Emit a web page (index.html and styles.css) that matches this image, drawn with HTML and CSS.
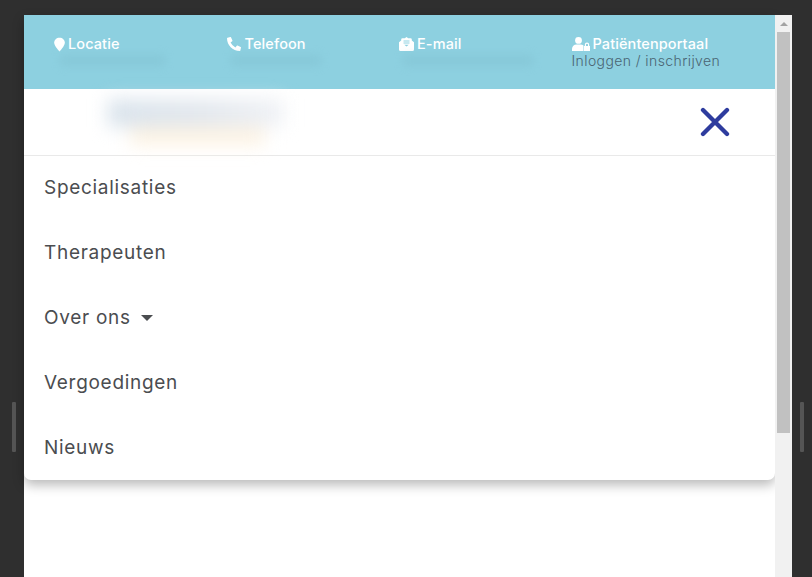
FILE: index.html
```html
<!DOCTYPE html>
<html lang="nl">
<head>
<meta charset="utf-8">
<title>Menu</title>
<link rel="stylesheet" href="styles.css">
</head>
<body>
<div class="gutter gutter-left"><span class="handle"></span></div>
<main class="page">
  <div class="content">
    <div class="panel">
      <section class="topbar">
        <div class="info">
          <div class="info-title"><svg class="icon icon-pin" viewBox="0 0 12 15"><path d="M6 0C2.700 0 .2 2.300.2 5.400.2 8.600 3.600 12.600 6 15c2.400-2.400 5.800-6.400 5.800-9.600C11.800 2.300 9.300 0 6 0z"/></svg>Locatie</div>
          <div class="smudge smudge-a"></div>
        </div>
        <div class="info">
          <div class="info-title"><svg class="icon icon-phone" viewBox="0 0 512 512"><path d="M497.39 361.8l-112-48a24 24 0 0 0-28 6.9l-49.6 60.6A370.66 370.66 0 0 1 130.6 204.11l60.6-49.6a23.94 23.94 0 0 0 6.9-28l-48-112A24.16 24.16 0 0 0 122.6.61l-104 24A24 24 0 0 0 0 48c0 256.5 207.9 464 464 464a24 24 0 0 0 23.4-18.6l24-104a24.29 24.29 0 0 0-14.01-27.6z"/></svg>Telefoon</div>
          <div class="smudge smudge-b"></div>
        </div>
        <div class="info">
          <div class="info-title"><svg class="icon icon-mail" viewBox="0 0 15 14"><path fill-rule="evenodd" d="M7.500 0 5.800 1.200H3.500A1.300 1.300 0 0 0 2.200 2.500V3.600L0 5.300V12.500A1.500 1.500 0 0 0 1.500 14h12a1.500 1.500 0 0 0 1.500-1.500V5.300L12.800 3.600V2.500a1.300 1.300 0 0 0-1.300-1.300H9.200zM4.500 3.400h6v1h-6zm0 2.200h6v1h-6zM5.300 7.800h4.400L7.500 9.400z"/></svg>E-mail</div>
          <div class="smudge smudge-c"></div>
        </div>
        <div class="info">
          <div class="info-title"><svg class="icon icon-user" viewBox="0 0 18 14"><circle cx="6.500" cy="3.400" r="3.400"/><path d="M4.500 7.600h4c1.200 0 2.200.4 3 1V14H0v-2C0 9.500 2 7.600 4.500 7.600z"/><path d="M12 9h.8V7.800a2.200 2.200 0 0 1 4.400 0V9h.8v5h-6zm2-1.200V9h2V7.800a1 1 0 0 0-2 0z" fill-rule="evenodd"/></svg>Patiëntenportaal</div>
          <div class="info-sub">Inloggen / inschrijven</div>
        </div>
      </section>
      <header class="brandbar">
        <div class="logo-blur"><span class="logo-blue"></span><span class="logo-sand"></span></div>
        <svg class="close" viewBox="0 0 30 30"><path d="M3 3 27 27M27 3 3 27"/></svg>
      </header>
      <nav class="menu">
        <a class="menu-item">Specialisaties</a>
        <a class="menu-item">Therapeuten</a>
        <a class="menu-item">Over ons<span class="caret"></span></a>
        <a class="menu-item">Vergoedingen</a>
        <a class="menu-item">Nieuws</a>
      </nav>
    </div>
  </div>
  <aside class="scrollbar">
    <span class="arrow"></span>
    <span class="thumb"></span>
  </aside>
</main>
<div class="gutter gutter-right"><span class="handle"></span></div>
</body>
</html>
```
FILE: styles.css
```css
* { box-sizing: border-box; }
html, body { height: 100%; }
body {
  margin: 0;
  display: flex;
  overflow: hidden;
  background: #2f2f2f;
  font-family: Inter, "Liberation Sans", sans-serif;
}
.gutter { flex: none; padding-top: 402px; }
.gutter-left { width: 24px; padding-left: 12px; }
.gutter-right { width: 20px; padding-left: 8px; }
.handle { display: block; width: 4px; height: 50px; background: #555; border-radius: 1px; }
.page { flex: none; width: 768px; height: 562px; margin-top: 15px; display: flex; background: #fff; }
.content { flex: none; width: 751px; }
.panel {
  background: #fff;
  border-radius: 0 0 7px 7px;
  box-shadow: 0 5px 12px rgba(0, 0, 0, .28);
}
.topbar {
  height: 74px;
  padding: 20px 0 0 30px;
  display: grid;
  grid-template-columns: repeat(4, 172.5px);
  background: #8dd0e0;
  overflow: hidden;
}
.info-title {
  display: flex;
  align-items: center;
  height: 18px;
  font-size: 14.500px;
  font-weight: 500;
  line-height: 18px;
  letter-spacing: .1px;
  color: #fff;
  white-space: nowrap;
}
.info-sub { font-size: 14px; font-weight: 300; line-height: 15px; letter-spacing: .4px; color: #4a6472; white-space: nowrap; }
.icon { flex: none; fill: #fff; }
.icon-pin { width: 11px; height: 15px; margin-right: 3px; }
.icon-phone { width: 14px; height: 14px; margin-right: 4px; }
.icon-mail { width: 15px; height: 14px; margin-right: 3px; }
.icon-user { width: 18px; height: 14px; margin-right: 3px; }
.smudge { height: 11px; margin-top: 2px; background: #7dbccc; filter: blur(5px); opacity: .38; }
.smudge-a { width: 105px; margin-left: 6px; }
.smudge-b { width: 90px; margin-left: 4px; }
.smudge-c { width: 130px; margin-left: 4px; }
.brandbar {
  height: 67px;
  padding: 0 45px 0 84px;
  display: flex;
  align-items: center;
  justify-content: space-between;
  border-bottom: 1px solid #e9e9e9;
}
.logo-blur { width: 180px; height: 54px; filter: blur(9px); display: flex; flex-direction: column; }
.logo-blue { display: block; width: 175px; height: 28px; margin-top: 4px; background: linear-gradient(90deg, #d9e3ec, #e3e8ee 55%, #f0f2f6); }
.logo-sand { display: block; width: 135px; height: 18px; margin-left: 22px; background: #fdf3e3; }
.close { width: 30px; height: 30px; fill: none; stroke: #2e3c9e; stroke-width: 4.300; stroke-linecap: round; }
.menu { display: flex; flex-direction: column; height: 324px; }
.menu-item {
  flex: none;
  height: 65px;
  padding: 0 0 3px 20px;
  display: flex;
  align-items: center;
  font-size: 19px;
  letter-spacing: .7px;
  color: #4b4d50;
  white-space: nowrap;
}
.caret {
  width: 0;
  height: 0;
  margin-left: 10px;
  margin-top: 2px;
  border-left: 6px solid transparent;
  border-right: 6px solid transparent;
  border-top: 6px solid #4b4d50;
}
.scrollbar { flex: 1; display: flex; flex-direction: column; align-items: center; padding-top: 7px; background: #f1f1f1; }
.arrow { width: 0; height: 0; border-left: 4px solid transparent; border-right: 4px solid transparent; border-bottom: 4px solid #a3a3a3; }
.thumb { width: 13px; height: 401px; margin-top: 6px; background: #c1c1c1; }
```
